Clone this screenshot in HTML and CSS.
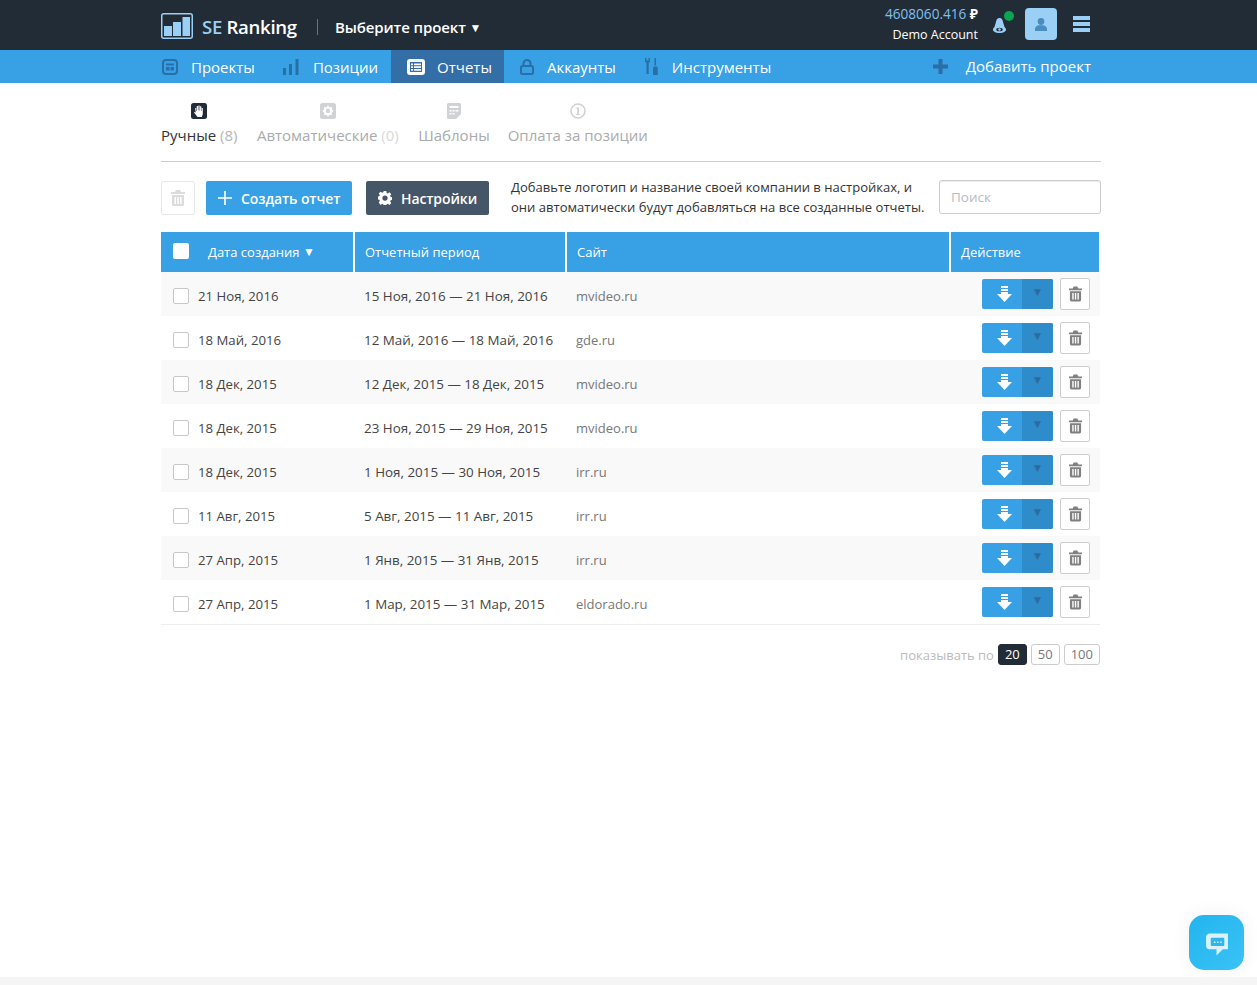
FILE: index.html
```html
<!DOCTYPE html>
<html lang="ru">
<head>
<meta charset="utf-8">
<title>SE Ranking</title>
<link rel="stylesheet" href="styles.css">
</head>
<body>
<svg class="defs" width="0" height="0" aria-hidden="true">
  <symbol id="trash" viewBox="0 0 14 16"><path fill="currentColor" d="M5 0h4l1 2h4v2H0V2h4zM1 5h12v9.500a1.500 1.500 0 0 1-1.500 1.500h-9A1.500 1.500 0 0 1 1 14.500zm2.500 2v7h1.500V7zm2.800 0v7h1.500V7zm2.800 0v7h1.500V7z" fill-rule="evenodd"/></symbol>
  <symbol id="down" viewBox="0 0 15 16"><path fill="currentColor" d="M4 0h7v2H4zM4 3h7v2H4zM4 6h7v2h4l-7.500 8L0 8h4z"/></symbol>
</svg>
<header class="top">
  <div class="top-in">
    <div class="brand">
      <svg class="logo" width="32" height="26" viewBox="0 0 32 26"><rect x=".75" y=".75" width="30.500" height="24.500" rx="2" fill="none" stroke="#9ad0f5" stroke-width="1.500"/><path fill="#9ad0f5" d="M3 13h8v10H3zM12 9h8v14h-8zM21.500 4H29v19h-7.500z"/></svg>
      <span class="brand-name"><span class="se">SE</span> Ranking</span>
      <span class="sep"></span>
      <span class="project">Выберите проект <span class="caret">▼</span></span>
    </div>
    <div class="user">
      <div class="balance">
        <div class="sum">4608060.416 <b>₽</b></div>
        <div class="acct">Demo Account</div>
      </div>
      <div class="bell">
        <svg class="bell-ic" width="13" height="15" viewBox="0 0 14 16"><path fill="#9ad0f5" d="M7 0c2.500 0 3.500 2 4 5l1.500 5c1 .8 1.500 1.500 1.500 2.500C14 14.500 11 16 7 16s-7-1.500-7-3.500C0 11.500.5 10.800 1.500 10L3 5c.5-3 1.500-5 4-5z"/><ellipse cx="7" cy="12.300" rx="3.500" ry="2" fill="#222c37"/><circle cx="7" cy="12.300" r="1.300" fill="#9ad0f5"/></svg>
        <i class="dot"></i>
      </div>
      <div class="avatar"><svg width="12" height="13" viewBox="0 0 12 13"><path fill="#4a8cc0" d="M6 0a3.300 3.300 0 0 1 3.300 3.500C9.300 5.500 8 7 6 7S2.700 5.500 2.700 3.500A3.300 3.300 0 0 1 6 0zM0 13v-2c0-2 2-3.200 3.500-3.700h5C10 7.800 12 9 12 11v2z"/></svg></div>
      <div class="burger"><i></i><i></i><i></i></div>
    </div>
  </div>
</header>
<nav class="nav">
  <div class="nav-in">
    <a class="item first"><svg width="16" height="16" viewBox="0 0 16 16"><rect x="1" y="1" width="14" height="14" rx="3" fill="none" stroke="#2a6ea6" stroke-width="2"/><path fill="#2a6ea6" d="M4 4.500h8v2H4zM4 8h3.500v3.500H4zM8.500 8H12v3.500H8.500z"/></svg>Проекты</a>
    <a class="item pos"><svg width="16" height="16" viewBox="0 0 16 16"><path fill="#2a6ea6" d="M0 9h3v7H0zM6 5h3v11H6zM12.500 0h3v16h-3z"/></svg>Позиции</a>
    <a class="item active"><svg width="18" height="16" viewBox="0 0 18 16"><path fill="#fff" fill-rule="evenodd" d="M3 0h12a3 3 0 0 1 3 3v10a3 3 0 0 1-3 3H3a3 3 0 0 1-3-3V3a3 3 0 0 1 3-3zm0 3v10h12V3zM4 4.500h2v1.800H4zM7 4.500h7v1.800H7zM4 7.200h2V9H4zM7 7.200h7V9H7zM4 10h2v1.800H4zM7 10h7v1.800H7z"/></svg>Отчеты</a>
    <a class="item"><svg width="14" height="16" viewBox="0 0 14 16"><path fill="none" stroke="#2a6ea6" stroke-width="2" d="M3.500 7V4.500a3.500 3.500 0 0 1 7 0V7"/><rect x="1" y="7" width="12" height="8" rx="1.500" fill="none" stroke="#2a6ea6" stroke-width="2"/></svg>Аккаунты</a>
    <a class="item"><svg width="14" height="17" viewBox="0 0 14 17"><path fill="#2a6ea6" d="M0 0l1.500 0v2.500h2V0H5v3.500L3.700 5v11H1.500V5L0 3.500zM9.500 0h1.500v7.500h-1.500zM8.500 8.500H12l.8 2V17H8v-6.500z"/></svg>Инструменты</a>
    <a class="item add"><svg width="15" height="15" viewBox="0 0 15 15"><path fill="#2a6ea6" d="M5.500 0h4v5.500H15v4H9.500V15h-4V9.500H0v-4h5.500z"/></svg>Добавить проект</a>
  </div>
</nav>
<main class="page">
  <div class="tabs">
    <div class="tab on">
      <span class="tab-ic"><svg width="16" height="16" viewBox="0 0 16 16"><rect width="16" height="16" rx="2.500" fill="#222c37"/><path fill="#fff" d="M4.200 5h1v3h.5V3h1.200v4.500h.5V2.500h1.200v5h.5V3.300h1.200V8h.4V5h1.100v6l-1 3H6.500L3 9.500l.7-.8 1 1z"/></svg></span>
      <span>Ручные <em>(8)</em></span>
    </div>
    <div class="tab">
      <span class="tab-ic"><svg width="16" height="16" viewBox="0 0 16 16"><rect width="16" height="16" rx="2.500" fill="#cfd3d6"/><circle cx="8" cy="8" r="3.200" fill="none" stroke="#fff" stroke-width="2"/><path stroke="#fff" stroke-width="1.800" d="M8 2.800v2.200M8 11v2.200M2.800 8H5M11 8h2.200M4.300 4.300l1.500 1.500M10.200 10.200l1.500 1.500M4.300 11.700l1.500-1.500M10.200 5.800l1.500-1.500"/></svg></span>
      <span>Автоматические <em class="pale">(0)</em></span>
    </div>
    <div class="tab tpl">
      <span class="tab-ic"><svg width="14" height="16" viewBox="0 0 14 16"><path fill="#cfd3d6" fill-rule="evenodd" d="M1.500 0h11A1.500 1.500 0 0 1 14 1.500V11l-5 5H1.500A1.500 1.500 0 0 1 0 14.500v-13A1.500 1.500 0 0 1 1.500 0zM2.500 3v2h9V3zM2.500 7v1.500h2V7zM5.500 7v1.500h2V7zM8.500 7v1.500h3V7zM2.500 10v1.500h2V10zM5.500 10v1.500h2V10z"/></svg></span>
      <span>Шаблоны</span>
    </div>
    <div class="tab">
      <span class="tab-ic"><svg width="16" height="16" viewBox="0 0 16 16"><circle cx="8" cy="8" r="7" fill="none" stroke="#cfd3d6" stroke-width="1.600"/><path fill="#cfd3d6" d="M6.500 4.500H9v6.500h1v1H6v-1h1.300V6H6.500z"/></svg></span>
      <span>Оплата за позиции</span>
    </div>
  </div>
  <div class="toolbar">
    <button class="trash-big"><svg width="14" height="16"><use href="#trash"/></svg></button>
    <button class="btn blue"><svg width="14" height="14" viewBox="0 0 14 14"><path fill="#fff" d="M6.200 0h1.600v6.200H14v1.600H7.800V14H6.200V7.800H0V6.200h6.200z"/></svg>Создать отчет</button>
    <button class="btn slate"><svg width="14" height="14" viewBox="0 0 16 16"><path fill="#fff" fill-rule="evenodd" d="M6.500 0h3l.4 2.200 1.300.6L13.100 1.500l2.100 2.100-1.300 1.900.6 1.300 2.200.4v3l-2.200.4-.6 1.300 1.300 1.900-2.100 2.100-1.900-1.300-1.300.6-.4 2.200h-3l-.4-2.200-1.300-.6-1.900 1.300L.8 13.100l1.300-1.900-.6-1.300L-.7 9.500v-3l2.200-.4.600-1.300L.8 2.900 2.900.8l1.900 1.300 1.300-.6zM8 5a3 3 0 1 0 0 6 3 3 0 0 0 0-6z"/></svg>Настройки</button>
    <p class="hint">Добавьте логотип и название своей компании в настройках, и они автоматически будут добавляться на все созданные отчеты.</p>
    <input class="search" type="text" placeholder="Поиск">
  </div>
  <div class="table">
    <div class="head">
      <div class="th first-col"><span class="box hb"></span><span class="th-date">Дата создания <span class="caret">▼</span></span></div>
      <div class="th">Отчетный период</div>
      <div class="th">Сайт</div>
      <div class="th">Действие</div>
    </div>
    <div class="row"><div class="c-date"><span class="box"></span>21 Ноя, 2016</div><div class="c-per">15 Ноя, 2016 — 21 Ноя, 2016</div><div class="c-site">mvideo.ru</div><div class="c-act"><span class="dl"><span class="dl-a"><svg width="15" height="16"><use href="#down"/></svg></span><span class="dl-b">▼</span></span><span class="del"><svg width="13" height="16"><use href="#trash"/></svg></span></div></div>
    <div class="row"><div class="c-date"><span class="box"></span>18 Май, 2016</div><div class="c-per">12 Май, 2016 — 18 Май, 2016</div><div class="c-site">gde.ru</div><div class="c-act"><span class="dl"><span class="dl-a"><svg width="15" height="16"><use href="#down"/></svg></span><span class="dl-b">▼</span></span><span class="del"><svg width="13" height="16"><use href="#trash"/></svg></span></div></div>
    <div class="row"><div class="c-date"><span class="box"></span>18 Дек, 2015</div><div class="c-per">12 Дек, 2015 — 18 Дек, 2015</div><div class="c-site">mvideo.ru</div><div class="c-act"><span class="dl"><span class="dl-a"><svg width="15" height="16"><use href="#down"/></svg></span><span class="dl-b">▼</span></span><span class="del"><svg width="13" height="16"><use href="#trash"/></svg></span></div></div>
    <div class="row"><div class="c-date"><span class="box"></span>18 Дек, 2015</div><div class="c-per">23 Ноя, 2015 — 29 Ноя, 2015</div><div class="c-site">mvideo.ru</div><div class="c-act"><span class="dl"><span class="dl-a"><svg width="15" height="16"><use href="#down"/></svg></span><span class="dl-b">▼</span></span><span class="del"><svg width="13" height="16"><use href="#trash"/></svg></span></div></div>
    <div class="row"><div class="c-date"><span class="box"></span>18 Дек, 2015</div><div class="c-per">1 Ноя, 2015 — 30 Ноя, 2015</div><div class="c-site">irr.ru</div><div class="c-act"><span class="dl"><span class="dl-a"><svg width="15" height="16"><use href="#down"/></svg></span><span class="dl-b">▼</span></span><span class="del"><svg width="13" height="16"><use href="#trash"/></svg></span></div></div>
    <div class="row"><div class="c-date"><span class="box"></span>11 Авг, 2015</div><div class="c-per">5 Авг, 2015 — 11 Авг, 2015</div><div class="c-site">irr.ru</div><div class="c-act"><span class="dl"><span class="dl-a"><svg width="15" height="16"><use href="#down"/></svg></span><span class="dl-b">▼</span></span><span class="del"><svg width="13" height="16"><use href="#trash"/></svg></span></div></div>
    <div class="row"><div class="c-date"><span class="box"></span>27 Апр, 2015</div><div class="c-per">1 Янв, 2015 — 31 Янв, 2015</div><div class="c-site">irr.ru</div><div class="c-act"><span class="dl"><span class="dl-a"><svg width="15" height="16"><use href="#down"/></svg></span><span class="dl-b">▼</span></span><span class="del"><svg width="13" height="16"><use href="#trash"/></svg></span></div></div>
    <div class="row"><div class="c-date"><span class="box"></span>27 Апр, 2015</div><div class="c-per">1 Мар, 2015 — 31 Мар, 2015</div><div class="c-site">eldorado.ru</div><div class="c-act"><span class="dl"><span class="dl-a"><svg width="15" height="16"><use href="#down"/></svg></span><span class="dl-b">▼</span></span><span class="del"><svg width="13" height="16"><use href="#trash"/></svg></span></div></div>
  </div>
  <div class="pager">
    <span class="pager-label">показывать по</span>
    <span class="pg cur">20</span><span class="pg">50</span><span class="pg">100</span>
  </div>
</main>
<div class="chat"><svg width="25" height="25" viewBox="0 0 24 24"><path fill="#d8f3fd" d="M5 1.500h18v15h-5l-6 6v-6H5a3 3 0 0 1-3-3V5a3.500 3.500 0 0 1 3-3.500z"/><rect x="6.500" y="5.500" width="13" height="8" rx="1" fill="#2fb6ee"/><path fill="#d8f3fd" d="M9.500 9H11v1.500H9.500zM12.500 9H14v1.500h-1.500zM15.500 9H17v1.500h-1.500z"/></svg></div>
<div class="foot"></div>
</body>
</html>
```
FILE: styles.css
```css
* { box-sizing: border-box; }
html, body { margin: 0; height: 100%; }
body { font-family: "Open Sans", "Noto Sans", sans-serif; font-size: 14px; color: #333; background: #fff; min-height: 985px; position: relative; overflow: hidden; }
.defs { position: absolute; }
svg { display: block; flex: none; }
.top { height: 50px; background: #222c37; }
.top-in { margin-left: 161px; width: 929px; height: 50px; display: flex; justify-content: space-between; align-items: center; color: #fff; }
.brand { display: flex; align-items: center; padding-top: 2px; }
.brand-name { margin-left: 9px; font-size: 18.6px; font-weight: 600; letter-spacing: -.3px; }
.se { color: #9ad0f5; }
.sep { width: 1px; height: 16px; background: #6b737b; margin: 2px 17px 0 20px; }
.project { font-size: 15px; font-weight: 600; letter-spacing: -.1px; margin-top: 2px; }
.caret { font-size: 12px; position: relative; top: -1px; }
.user { display: flex; align-items: center; padding-bottom: 2px; }
.balance { text-align: right; margin-right: 14px; }
.sum { font-size: 13.6px; line-height: 20px; color: #7fc0ef; }
.sum b { color: #fff; font-weight: 700; }
.acct { font-size: 12.5px; line-height: 20px; color: #fff; margin-top: 1px; }
.bell { position: relative; width: 14px; height: 15px; margin-top: 2px; margin-right: 19px; }
.bell-ic { margin-left: 1px; }
.dot { position: absolute; left: 12px; top: -7px; width: 10px; height: 10px; border-radius: 50%; background: #0aa551; }
.avatar { width: 32px; height: 32px; border-radius: 4px; background: #9ad0f5; display: flex; align-items: center; justify-content: center; }
.burger { margin-left: 16px; width: 17px; display: flex; flex-direction: column; gap: 2px; }
.burger i { display: block; height: 4px; background: #9ad0f5; }
.nav { height: 33px; background: #38a0e4; }
.nav-in { margin-left: 161px; width: 930px; height: 33px; display: flex; }
.item { display: flex; align-items: center; height: 33px; color: #fff; font-size: 15px; padding: 0 13px 0 16px; gap: 13px; }
.item.first { padding: 0 12px 0 1px; }
.item.pos { gap: 14px; }
.item.active { background: #346ea7; gap: 12px; padding-right: 12px; }
.item.add { margin-left: auto; padding: 0 0 2px; gap: 18px; }
.item.add svg { margin-top: 2px; }
.page { margin-left: 161px; width: 939px; }
.tabs { padding-top: 20px; width: 940px; height: 79px; border-bottom: 1px solid #ccc; display: flex; gap: 19px; color: #a9abac; font-size: 15px; }
.tab { display: flex; flex-direction: column; align-items: center; gap: 6px; }
.tab.on { margin-right: .5px; }
.tab.tpl { margin-left: .5px; }
.tab:last-child { margin-left: -1px; }
.tab-ic { height: 16px; }
.tab.on { color: #333; }
.tab em { font-style: normal; color: #b5b6b7; }
.tab em.pale { color: #d9dadb; }
.toolbar { display: flex; align-items: flex-start; margin-top: 19px; height: 51px; }
.toolbar > * { flex: none; }
.trash-big { width: 34px; height: 34px; border: 1px solid #e8e8e8; border-radius: 2px; background: #fff; color: #dcdcdc; padding: 0; display: flex; align-items: center; justify-content: center; }
.btn { height: 34px; border: 0; border-radius: 2px; color: #fff; font: 600 14px "Open Sans", sans-serif; display: flex; align-items: center; padding: 0; letter-spacing: -.1px; }
.blue { background: #38a0e4; width: 146px; margin-left: 11px; padding-left: 12px; gap: 9px; }
.slate { background: #455669; width: 123px; margin-left: 14px; padding-left: 12px; gap: 9px; }
.hint { margin: -4px 0 0 22px; width: 428px; padding-right: 13px; font-size: 13.05px; line-height: 20px; color: #333; }
.search { margin: -1px 0 0 0; width: 162px; height: 34px; border: 1px solid #ccc; border-radius: 3px; padding: 0 11px; font: 13.500px "Open Sans", sans-serif; color: #333; box-shadow: inset 0 1px 1px rgba(0,0,0,.075); }
.search::placeholder { color: #b4bcc4; opacity: 1; }
.table { width: 939px; border-bottom: 1px solid #eee; }
.head { display: grid; grid-template-columns: 194px 212px 384px 148px; height: 40px; }
.row { display: grid; grid-template-columns: 192px 212px 384px 151px; }
.th { background: #38a0e4; color: #fff; font-size: 13px; display: flex; align-items: center; padding: 0 0 0 10px; margin-right: 2px; height: 40px; }
.th:last-child { margin-right: 0; }
.first-col { padding-left: 12px; }
.th-date { margin-left: 19px; }
.box { display: inline-block; flex: none; width: 16px; height: 16px; border: 1px solid #c9c9c9; border-radius: 2px; background: #fff; }
.hb { border: 0; margin-top: -3px; }
.row { height: 44px; align-items: center; color: #444; width: 939px; padding-top: 4px; }
.row:nth-child(even) { background: #f9f9f9; }
.c-date { display: flex; align-items: center; gap: 9px; padding-left: 12px; font-size: 13.200px; }
.c-per { padding-left: 11px; font-size: 13.400px; }
.c-site { padding-left: 11px; color: #777; font-size: 13px; }
.c-act { display: flex; justify-content: flex-end; gap: 7px; padding-right: 10px; margin-top: -4px; }
.dl { display: flex; width: 71px; height: 30px; border-radius: 2px; overflow: hidden; background: #38a0e4; color: #fff; }
.dl-a { width: 40px; display: flex; align-items: center; justify-content: center; padding: 1px 0 0 4px; }
.dl-b { flex: 1; background: #2f8ccb; color: #2a6c9e; font-size: 12px; text-align: center; line-height: 26px; }
.del { width: 30px; height: 32px; border: 1px solid #ccc; border-radius: 2px; background: #fff; color: #808080; display: flex; align-items: center; justify-content: center; margin-top: -1px; }
.pager { display: flex; justify-content: flex-end; align-items: center; margin-top: 19px; gap: 4px; font-size: 13px; }
.pager-label { color: #bbb; }
.pg { height: 21px; padding: 0 6px; border: 1px solid #ccc; border-radius: 3px; color: #777; line-height: 19px; }
.pg.cur { background: #222c37; border-color: #222c37; color: #fff; }
.chat { position: absolute; left: 1189px; top: 915px; width: 55px; height: 55px; border-radius: 15px; padding-top: 4px; background: linear-gradient(135deg, #22b5ef, #3bc2f5); display: flex; align-items: center; justify-content: center; box-shadow: 0 0 20px rgba(0,0,0,.06); }
.foot { position: absolute; left: 0; right: 0; top: 977px; height: 8px; background: #f5f5f5; }
```
